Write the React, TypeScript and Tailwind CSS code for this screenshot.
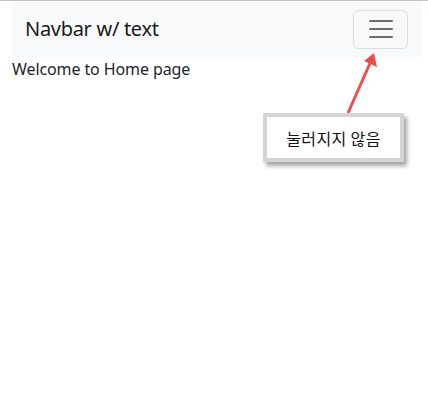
export default function App() {
  return (
    <div className="relative w-[428px] h-[413px] bg-white border-t border-[#c4c4c4] font-['Noto_Sans','Noto_Sans_CJK_KR',sans-serif]">
      <div className="ml-[12px] w-[409px]">
        <nav className="flex items-center justify-between h-[56px] px-[13px] bg-[#f8f9fa]">
          <span className="text-[20px] leading-[30px] text-[#1a1a1a] tracking-[-0.3px]">Navbar w/ text</span>
          <button className="flex items-center justify-center w-[55px] h-[39px] border border-[#dcdddf] rounded-[6px]">
            <svg width="30" height="30" viewBox="0 0 30 30">
              <path d="M4 7h22M4 15h22M4 23h22" stroke="#6e6f70" strokeWidth="2" strokeLinecap="round" />
            </svg>
          </button>
        </nav>
        <div className="text-[16px] leading-[24px] text-[#212529] tracking-[-0.1px]">Welcome to Home page</div>
      </div>

      {/* annotation overlay */}
      <svg className="absolute left-0 top-0" width="428" height="413">
        <line x1="348" y1="112" x2="371" y2="60" stroke="#e8524b" strokeWidth="3" />
        <polygon points="374,52 377,66 364,60" fill="#e8524b" />
      </svg>
      <div className="absolute left-[263px] top-[112px] w-[141px] h-[49px] bg-white border-[4px] border-[#d4d4d4] shadow-[3px_4px_4px_rgba(0,0,0,0.35)] flex items-center justify-center">
        <span className="text-[16px] tracking-[0.4px] text-[#111] font-['Noto_Sans_CJK_KR',sans-serif]">눌러지지 않음</span>
      </div>
    </div>
  );
}
